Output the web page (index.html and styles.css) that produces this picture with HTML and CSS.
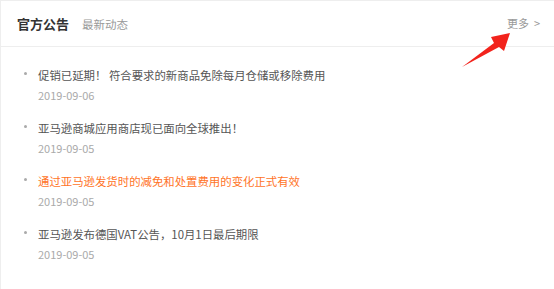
FILE: index.html
```html
<!DOCTYPE html>
<html lang="zh-CN">
  <head>
    <meta charset="UTF-8" />
    <meta name="viewport" content="width=device-width, initial-scale=1.0" />
    <title>官方公告</title>
    <link rel="stylesheet" href="styles.css">
  </head>
  <body>
    <div class="panel">
      <div class="panel-header">
        <div class="panel-title">
          <h2>官方公告</h2>
          <span class="sub">最新动态</span>
        </div>
        <a class="more" href="#">更多<span class="chevron">&gt;</span></a>
      </div>

      <ul class="news-list">
        <li class="news-item">
          <span class="dot"></span>
          <a href="#" class="news-title">促销已延期！ 符合要求的新商品免除每月仓储或移除费用</a>
          <span class="news-date">2019-09-06</span>
        </li>
        <li class="news-item">
          <span class="dot"></span>
          <a href="#" class="news-title">亚马逊商城应用商店现已面向全球推出！</a>
          <span class="news-date">2019-09-05</span>
        </li>
        <li class="news-item">
          <span class="dot"></span>
          <a href="#" class="news-title active">通过亚马逊发货时的减免和处置费用的变化正式有效</a>
          <span class="news-date">2019-09-05</span>
        </li>
        <li class="news-item">
          <span class="dot"></span>
          <a href="#" class="news-title">亚马逊发布德国VAT公告，10月1日最后期限</a>
          <span class="news-date">2019-09-05</span>
        </li>
      </ul>

      <svg class="pointer" width="60" height="44" viewBox="0 0 60 44">
        <polygon points="5,37 37,13 34,7 53,3 47,21 42,17" fill="#f2231c" />
      </svg>
    </div>
  </body>
</html>
```

FILE: styles.css
```css
* {
  margin: 0;
  padding: 0;
  box-sizing: border-box;
  font-family: "Noto Sans CJK SC", "Liberation Sans", sans-serif;
}

body {
  background-color: white;
}

a {
  text-decoration: none;
}

.panel {
  position: relative;
  height: 289px;
  border-top: 1px solid #eee;
  border-left: 1px solid #eee;
  background-color: white;
}

.panel-header {
  height: 46px;
  display: flex;
  align-items: center;
  justify-content: space-between;
  padding: 0 14px 0 16px;
  border-bottom: 1px solid #eee;
}

.panel-title {
  display: flex;
  align-items: baseline;
  gap: 13px;
}

.panel-title h2 {
  font-size: 13px;
  font-weight: bold;
  color: #333;
}

.panel-title .sub {
  font-size: 11.5px;
  color: #999;
}

.more {
  font-size: 11px;
  color: #999;
  margin-top: -2px;
}

.more .chevron {
  margin-left: 5px;
}

.news-list {
  list-style: none;
  padding: 18px 0 0 23px;
}

.news-item {
  display: grid;
  grid-template-columns: 14px 1fr;
  grid-template-rows: 20px 20px;
  margin-bottom: 13px;
}

.dot {
  width: 3px;
  height: 3px;
  margin-top: 7px;
  background-color: #aaa;
  border-radius: 50%;
}

.news-title {
  font-size: 11.4px;
  line-height: 20px;
  color: #555;
}

.news-title.active {
  color: #ff7428;
}

.news-date {
  grid-column: 2;
  font-size: 11px;
  line-height: 20px;
  color: #aaa;
}

.pointer {
  position: absolute;
  left: 456px;
  top: 29px;
}
```
